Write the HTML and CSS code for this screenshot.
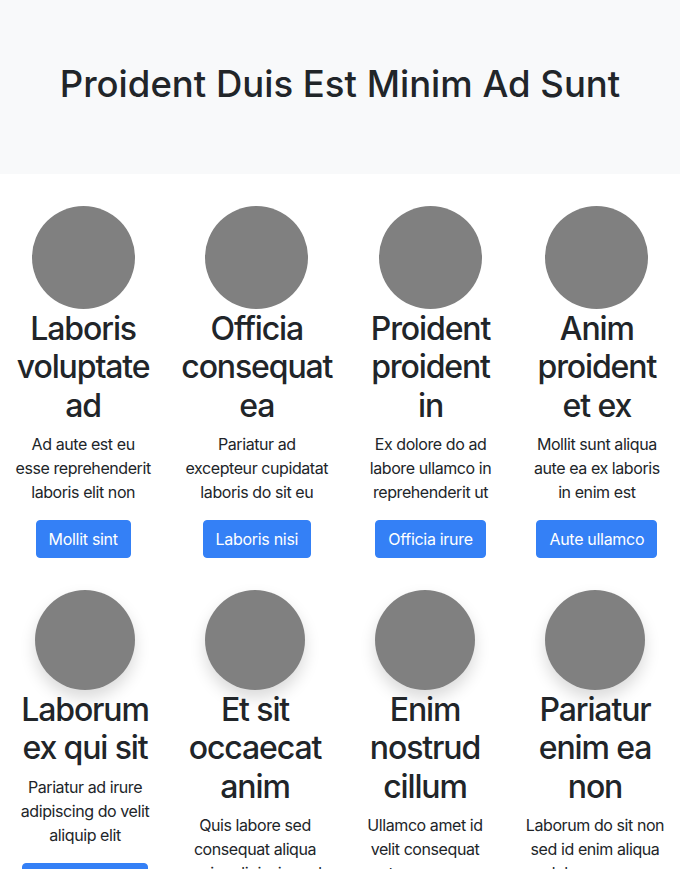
FILE: index.html
```html
<!DOCTYPE html>
<html lang="en">
<head>
<meta charset="utf-8">
<title>Proident Duis Est Minim Ad Sunt</title>
<link rel="stylesheet" href="styles.css">
</head>
<body>
<header class="hero">
  <h1 class="hero-title">Proident Duis Est Minim Ad Sunt</h1>
</header>
<main class="content">
  <div class="row">
    <div class="col">
      <div class="avatar"></div>
      <h2 class="card-title">Laboris voluptate ad</h2>
      <p class="card-text">Ad aute est eu esse reprehenderit laboris elit non</p>
      <a class="btn" href="#">Mollit sint</a>
    </div>
    <div class="col">
      <div class="avatar"></div>
      <h2 class="card-title">Officia consequat ea</h2>
      <p class="card-text">Pariatur ad excepteur cupidatat laboris do sit eu</p>
      <a class="btn" href="#">Laboris nisi</a>
    </div>
    <div class="col">
      <div class="avatar"></div>
      <h2 class="card-title">Proident proident in</h2>
      <p class="card-text">Ex dolore do ad labore ullamco in reprehenderit ut</p>
      <a class="btn" href="#">Officia irure</a>
    </div>
    <div class="col">
      <div class="avatar"></div>
      <h2 class="card-title">Anim proident et ex</h2>
      <p class="card-text">Mollit sunt aliqua aute ea ex laboris in enim est</p>
      <a class="btn" href="#">Aute ullamco</a>
    </div>
  </div>
  <div class="row">
    <div class="col">
      <div class="avatar avatar-shadow"></div>
      <h2 class="card-title">Laborum ex qui sit</h2>
      <p class="card-text">Pariatur ad irure adipiscing do velit aliquip elit</p>
      <a class="btn" href="#">Consequat sit</a>
    </div>
    <div class="col">
      <div class="avatar avatar-shadow"></div>
      <h2 class="card-title">Et sit occaecat anim</h2>
      <p class="card-text">Quis labore sed consequat aliqua ea in adipiscing ad</p>
      <a class="btn" href="#">Sunt elit</a>
    </div>
    <div class="col">
      <div class="avatar avatar-shadow"></div>
      <h2 class="card-title">Enim nostrud cillum</h2>
      <p class="card-text">Ullamco amet id velit consequat tempor ea commodo</p>
      <a class="btn" href="#">Velit ad</a>
    </div>
    <div class="col">
      <div class="avatar avatar-shadow"></div>
      <h2 class="card-title">Pariatur enim ea non</h2>
      <p class="card-text">Laborum do sit non sed id enim aliqua dolore magna</p>
      <a class="btn" href="#">Irure nisi</a>
    </div>
  </div>
</main>
</body>
</html>
```

FILE: styles.css
```css
* {
  box-sizing: border-box;
}

html, body {
  margin: 0;
  padding: 0;
}

body {
  font-family: Inter, "Noto Sans", "Liberation Sans", sans-serif;
  font-size: 16px;
  line-height: 1.5;
  color: #212529;
  background: #ffffff;
}

.hero {
  background: #f8f9fa;
  padding: 63px 16px 67px;
  text-align: center;
}

.hero-title {
  margin: 0;
  font-size: 36.5px;
  font-weight: 500;
  line-height: 1.2;
}

.content {
  display: flex;
  flex-direction: column;
}

.row {
  display: flex;
  padding-top: 32px;
}

.col {
  flex: 1 1 0;
  padding: 0 15px;
  display: flex;
  flex-direction: column;
  align-items: center;
  text-align: center;
}

.avatar {
  width: 103px;
  height: 103px;
  margin-bottom: 1px;
  border-radius: 50%;
  background: #808080;
  flex-shrink: 0;
}

.avatar-shadow {
  width: 100px;
  height: 100px;
  box-shadow: 0 8px 16px rgba(0, 0, 0, 0.15);
}

.card-title {
  margin: 0 0 7px;
  font-size: 32px;
  font-weight: 500;
  line-height: 1.2;
  letter-spacing: -0.035em;
}

.card-text {
  margin: 0 0 16px;
  font-size: 16px;
  line-height: 24px;
  letter-spacing: -0.42px;
}

.btn {
  display: inline-block;
  padding: 6px 12px;
  font-size: 16px;
  line-height: 24px;
  letter-spacing: -0.3px;
  color: #ffffff;
  background: #3480f6;
  border: 1px solid #3480f6;
  border-radius: 4px;
  text-decoration: none;
  white-space: nowrap;
}
```
